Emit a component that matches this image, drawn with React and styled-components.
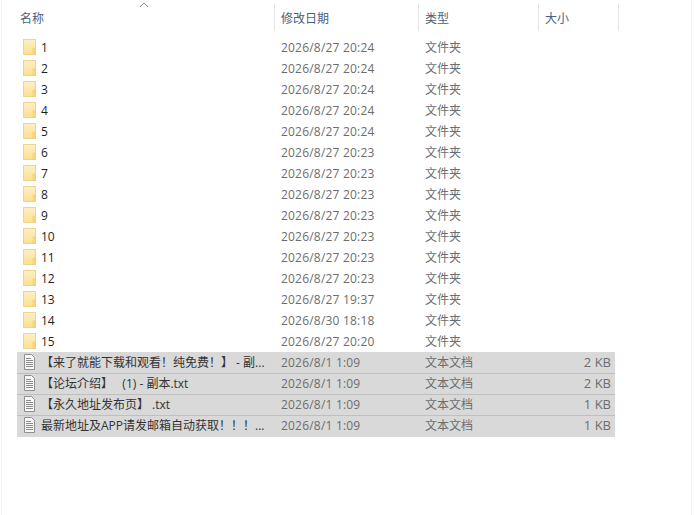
import styled, { createGlobalStyle } from "styled-components";

const GlobalStyle = createGlobalStyle`
  html, body {
    margin: 0;
    background: #fff;
  }
  body {
    font-family: "Open Sans", "Noto Sans CJK SC", sans-serif;
    font-size: 12px;
  }
`;

const Explorer = styled.div`
  box-sizing: border-box;
  width: 691px;
  height: 515px;
  margin-left: 1px;
  border-left: 1px solid #f4f4f4;
  border-right: 1px solid #f4f4f4;
  padding: 4px 0 0 15px;
  overflow: hidden;
`;

const HeaderRow = styled.div`
  position: relative;
  display: grid;
  grid-template-columns: 258px 144px 120px 80px;
  height: 27px;
  margin-bottom: 6px;
`;

const SortCaret = styled.svg`
  position: absolute;
  left: 122px;
  top: -2px;
  width: 10px;
  height: 6px;
`;

const HeaderCell = styled.div`
  display: flex;
  align-items: center;
  padding-left: ${(props) => props.$indent}px;
  border-right: 1px solid #e5e5e5;
  color: #4c607a;
  font-size: 12px;
`;

const FileList = styled.div`
  display: flex;
  flex-direction: column;
  width: 598px;
`;

const FileRow = styled.div`
  box-sizing: border-box;
  display: grid;
  grid-template-columns: 257px 144px 120px 77px;
  align-items: center;
  height: ${(props) => (props.$last ? "22px" : "21px")};
  padding-bottom: ${(props) => (props.$last ? "2px" : "1px")};
  background: ${(props) => (props.$selected ? "#d9d9d9" : "transparent")};
  box-shadow: ${(props) => (props.$divider ? "inset 0 1px 0 #bfbfbf" : "none")};
`;

const NameCell = styled.div`
  display: flex;
  align-items: center;
  gap: 5px;
  padding-left: 6px;
  color: ${(props) => (props.$selected ? "#333" : "#1e1e1e")};
  white-space: pre;
  overflow: hidden;
`;

const DateCell = styled.div`
  padding-left: 7px;
  color: #6d6d6d;
  letter-spacing: 0.2px;
`;

const TypeCell = styled.div`
  padding-left: 7px;
  color: #6d6d6d;
`;

const SizeCell = styled.div`
  padding-right: 4px;
  text-align: right;
  color: #6d6d6d;
  font-size: 13px;
`;

function FolderIcon() {
  return (
    <svg width="13" height="16" viewBox="0 0 13 16" style={{ flex: "none" }}>
      <defs>
        <linearGradient id="folderFill" x1="0" y1="0" x2="0" y2="1">
          <stop offset="0" stopColor="#fdf0c6" />
          <stop offset="1" stopColor="#fde08e" />
        </linearGradient>
      </defs>
      <rect x="0.5" y="0.5" width="12" height="15" fill="url(#folderFill)" stroke="#ecd493" />
      <rect x="10" y="9" width="2.5" height="6.5" fill="#f9d87c" stroke="#e8c972" strokeWidth="0.5" />
    </svg>
  );
}

function TextFileIcon() {
  return (
    <svg width="13" height="16" viewBox="0 0 13 16" style={{ flex: "none" }}>
      <path d="M1.5.5h7l3 3v12h-10z" fill="#f7f7f7" stroke="#8f8f8f" />
      <path d="M3 4.5h5M3 6.5h7M3 8.5h7M3 10.5h7M3 12.5h7" stroke="#8a8a8a" />
    </svg>
  );
}

const folders = [
  ["1", "2026/8/27 20:24"],
  ["2", "2026/8/27 20:24"],
  ["3", "2026/8/27 20:24"],
  ["4", "2026/8/27 20:24"],
  ["5", "2026/8/27 20:24"],
  ["6", "2026/8/27 20:23"],
  ["7", "2026/8/27 20:23"],
  ["8", "2026/8/27 20:23"],
  ["9", "2026/8/27 20:23"],
  ["10", "2026/8/27 20:23"],
  ["11", "2026/8/27 20:23"],
  ["12", "2026/8/27 20:23"],
  ["13", "2026/8/27 19:37"],
  ["14", "2026/8/30 18:18"],
  ["15", "2026/8/27 20:20"],
];

const files = [
  ["【来了就能下载和观看！纯免费！】 - 副...", "2 KB"],
  ["【论坛介绍】   (1) - 副本.txt", "2 KB"],
  ["【永久地址发布页】 .txt", "1 KB"],
  ["最新地址及APP请发邮箱自动获取！！！...", "1 KB"],
];

export default function App() {
  return (
    <Explorer>
      <GlobalStyle />
      <HeaderRow>
        <SortCaret viewBox="0 0 10 6">
          <path d="M1 5l4-4 4 4" fill="none" stroke="#8a8a8a" />
        </SortCaret>
        <HeaderCell $indent={3}>名称</HeaderCell>
        <HeaderCell $indent={6}>修改日期</HeaderCell>
        <HeaderCell $indent={6}>类型</HeaderCell>
        <HeaderCell $indent={6}>大小</HeaderCell>
      </HeaderRow>
      <FileList>
        {folders.map(([name, date]) => (
          <FileRow key={name}>
            <NameCell>
              <FolderIcon />
              {name}
            </NameCell>
            <DateCell>{date}</DateCell>
            <TypeCell>文件夹</TypeCell>
            <SizeCell />
          </FileRow>
        ))}
        {files.map(([name, size], i) => (
          <FileRow
            key={name}
            $selected
            $divider={i > 0}
            $last={i === files.length - 1}
          >
            <NameCell $selected>
              <TextFileIcon />
              {name}
            </NameCell>
            <DateCell>2026/8/1 1:09</DateCell>
            <TypeCell>文本文档</TypeCell>
            <SizeCell>{size}</SizeCell>
          </FileRow>
        ))}
      </FileList>
    </Explorer>
  );
}
